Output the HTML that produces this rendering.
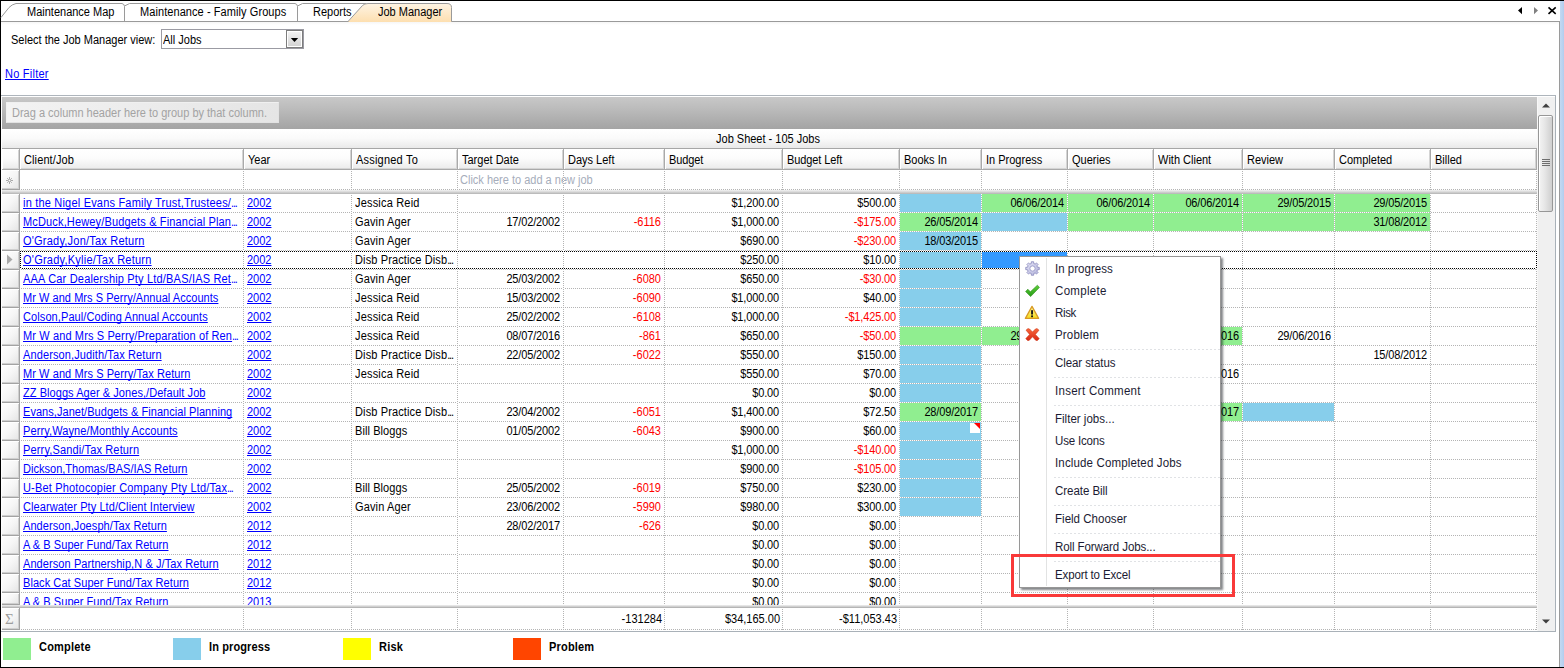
<!DOCTYPE html>
<html lang="en"><head><meta charset="utf-8"><title>Job Manager</title>
<style>
html,body{margin:0;padding:0}
body{width:1564px;height:668px;overflow:hidden;background:#fff;position:relative;
 font-family:"Liberation Sans",sans-serif;font-size:11px;color:#000}
div,span,a{position:absolute;box-sizing:border-box;white-space:nowrap}
.t{height:18px;line-height:18px;font-size:12px;transform:scaleX(.91667);transform-origin:0 0}
.r{text-align:right;transform-origin:100% 0}
.n{letter-spacing:-.16px}
.c{text-align:center;transform-origin:50% 0}
.neg{color:#f00}
a{color:#00f;text-decoration:underline;text-underline-offset:1px;text-decoration-thickness:1px;text-decoration-skip-ink:none}
.el{position:static;display:inline-block;text-decoration:none;letter-spacing:-1.3px}
.hd{height:21px;top:149px;background:linear-gradient(#fff 0,#fcfcfc 45%,#ebebeb 100%);box-shadow:inset 1px 1px 0 #fff,inset -1px -1px 0 #d4d4d4;
 border-right:1px solid #a9a9a9;border-bottom:1px solid #a9a9a9;overflow:hidden}
.vl{width:1px;background-image:repeating-linear-gradient(180deg,#fff 0 1px,#b4b4b4 1px 2px)}
.hl{height:1px;background-image:repeating-linear-gradient(90deg,#fff 0 1px,#b4b4b4 1px 2px)}
.sel{left:2px;width:18px;background:linear-gradient(135deg,#fff 0,#f6f6f6 50%,#e4e4e4 100%);border-right:1px solid #a3a3a3;border-bottom:1px solid #a3a3a3;box-shadow:inset 0 1px 0 #fff,inset -1px -1px 0 #cfcfcf}
.mi{left:35px;height:22px;line-height:23px;font-size:12px;color:#1b1b33;transform:scaleX(.96);transform-origin:0 0}
.ms{left:34px;width:166px;height:1px;background-image:repeating-linear-gradient(90deg,#e0e2e5 0 2px,#fff 2px 4px)}
.lg{width:28px;height:22px;top:638px}
.ll{top:638px;height:18px;line-height:18px;font-weight:bold;font-size:12px;transform:scaleX(.91667);transform-origin:0 0}
</style></head><body>

<div style="left:0;top:0;width:1564px;height:1px;background:#000"></div>
<div style="left:0;top:0;width:1px;height:668px;background:#000"></div>
<div style="left:0;top:667px;width:1564px;height:1px;background:#000"></div>
<div style="left:1560px;top:1px;width:4px;height:666px;background:linear-gradient(90deg,#c4d9f2,#b3cdee)"></div>
<div style="left:1px;top:21px;width:1559px;height:1px;background:#9a9a9a"></div>
<div style="left:1559px;top:21px;width:1px;height:646px;background:#9a9a9a"></div>
<div style="left:1px;top:22px;width:1558px;height:3px;background:linear-gradient(#f6f6f6,#fff)"></div>
<svg style="position:absolute;left:0;top:0" width="470" height="23" viewBox="0 0 470 23">
<defs><linearGradient id="tg" x1="0" y1="0" x2="0" y2="1"><stop offset="0" stop-color="#fef4e4"/><stop offset="1" stop-color="#fddfb0"/></linearGradient></defs>
<path d="M297.5 21 L297.5 6 L302.5 3.5 L366 3.5 L366 21" fill="#fff" stroke="#9a9a9a"/>
<path d="M124.5 21 L124.5 6 L129.5 3.5 L295 3.5 Q297.5 4 297.5 6.5 L297.5 21" fill="#fff" stroke="#9a9a9a"/>
<path d="M1 17.5 L9 7.5 Q12 4.4 16 3.5 L122 3.5 Q124.5 4 124.5 6.5 L124.5 21" fill="#fff" stroke="#9a9a9a"/>
<path d="M348 22 L362.5 5.5 Q364.5 3.5 368 3.5 L447 3.5 Q451.5 3.5 451.5 7.5 L451.5 22 Z" fill="url(#tg)" stroke="none"/>
<path d="M348 21.5 L362.5 5.5 Q364.5 3.5 368 3.5 L447 3.5 Q451.5 3.5 451.5 7.5 L451.5 21.5" fill="none" stroke="#9a9a9a"/>
</svg>
<span class="t" style="left:27px;top:3px">Maintenance Map</span>
<span class="t" style="left:140px;top:3px;letter-spacing:0.082px;">Maintenance - Family Groups</span>
<span class="t" style="left:313px;top:3px">Reports</span>
<span class="t" style="left:378px;top:3px">Job Manager</span>
<svg style="position:absolute;left:1514px;top:5px" width="46" height="12" viewBox="0 0 46 12">
<path d="M8 2 L8 9.2 L4 5.6 Z" fill="#000"/><path d="M20 2 L20 9.2 L24 5.6 Z" fill="#808080"/>
<path d="M34.5 2.4 L41.7 8.8 M41.7 2.4 L34.5 8.8" stroke="#000" stroke-width="1.6" fill="none"/></svg>
<span class="t" style="left:11px;top:31px">Select the Job Manager view:</span>
<div style="left:161px;top:29px;width:143px;height:20px;border:1px solid #9b9ba3;background:#fff"></div>
<span class="t" style="left:163px;top:31px">All Jobs</span>
<div style="left:286px;top:30px;width:17px;height:18px;border:1px solid #7d7d7d;background:linear-gradient(#f4f4f4,#d2d2d2);box-shadow:inset 0 0 0 1px #fff"></div>
<svg style="position:absolute;left:290px;top:37px" width="9" height="6" viewBox="0 0 9 6"><path d="M0.8 1 L8.2 1 L4.5 5 Z" fill="#000"/></svg>
<a class="t" style="left:5px;top:65px;letter-spacing:0.259px;">No Filter</a>
<div style="left:1px;top:95px;width:1555px;height:537px;border:1px solid #a9b1b8;border-left:0;border-top-color:#aeb5bc;background:#fff"></div>
<div style="left:2px;top:97px;width:1535px;height:32px;background:linear-gradient(#c8c8c8 0,#bcbcbc 35%,#a4a4a4 100%)"></div>
<div style="left:6px;top:102px;width:273px;height:21px;background:linear-gradient(90deg,#f3f3f3,#e5e5e5);border:1px solid #f0f0f0;border-right-color:#e2e2e2;border-bottom-color:#e2e2e2"></div>
<span class="t" style="left:12px;top:104px;color:#a3a3a3">Drag a column header here to group by that column.</span>
<div style="left:2px;top:129px;width:1535px;height:20px;background:linear-gradient(#fff,#fafafa 50%,#e9e9e9);border-bottom:1px solid #a6a6a6"></div>
<span class="t c" style="left:1px;width:1534px;top:130px">Job Sheet - 105 Jobs</span>
<div class="hd" style="left:2px;width:18px;padding:0"></div>
<div class="hd" style="left:20px;width:224px"><span class="t" style="left:4px;top:2px;letter-spacing:0.118px;">Client/Job</span></div>
<div class="hd" style="left:244px;width:108px"><span class="t" style="left:4px;top:2px;">Year</span></div>
<div class="hd" style="left:352px;width:106px"><span class="t" style="left:4px;top:2px;letter-spacing:0.225px;">Assigned To</span></div>
<div class="hd" style="left:458px;width:106px"><span class="t" style="left:4px;top:2px;">Target Date</span></div>
<div class="hd" style="left:564px;width:101px"><span class="t" style="left:4px;top:2px;">Days Left</span></div>
<div class="hd" style="left:665px;width:118px"><span class="t" style="left:4px;top:2px;letter-spacing:-0.123px;">Budget</span></div>
<div class="hd" style="left:783px;width:117px"><span class="t" style="left:4px;top:2px;letter-spacing:-0.097px;">Budget Left</span></div>
<div class="hd" style="left:900px;width:82px"><span class="t" style="left:4px;top:2px;">Books In</span></div>
<div class="hd" style="left:982px;width:86px"><span class="t" style="left:4px;top:2px;">In Progress</span></div>
<div class="hd" style="left:1068px;width:86px"><span class="t" style="left:4px;top:2px;">Queries</span></div>
<div class="hd" style="left:1154px;width:89px"><span class="t" style="left:4px;top:2px;">With Client</span></div>
<div class="hd" style="left:1243px;width:92px"><span class="t" style="left:4px;top:2px;">Review</span></div>
<div class="hd" style="left:1335px;width:96px"><span class="t" style="left:4px;top:2px;">Completed</span></div>
<div class="hd" style="left:1431px;width:106px"><span class="t" style="left:4px;top:2px;">Billed</span></div>
<div class="sel" style="top:170px;height:20px"></div>
<svg style="position:absolute;left:6px;top:177px" width="7" height="7" viewBox="0 0 7 7"><path d="M3.5 0V7M0 3.5H7M1.2 1.2L5.8 5.8M5.8 1.2L1.2 5.8" stroke="#a0a0a0" stroke-width="0.9" fill="none"/><circle cx="3.5" cy="3.5" r="1.1" fill="#fff" stroke="#b0b0b0" stroke-width="0.5"/></svg>
<span class="t" style="left:460px;top:171px;color:#a6adbb">Click here to add a new job</span>
<div class="hl" style="left:20px;top:189px;width:1517px"></div>
<div style="left:2px;top:190px;width:1535px;height:4px;background:linear-gradient(#f2f2f2,#dcdcdc 40%,#b3b3b3)"></div>
<div class="sel" style="top:194px;height:19px"></div>
<div style="left:0;top:194px;width:1537px;height:18px;overflow:hidden">
<div style="left:900px;top:0;width:81px;height:18px;background:#87ceeb"></div>
<div style="left:982px;top:0;width:85px;height:18px;background:#90ee90"></div>
<span class="t r n" style="left:982px;top:0;width:82px">06/06/2014</span>
<div style="left:1068px;top:0;width:85px;height:18px;background:#90ee90"></div>
<span class="t r n" style="left:1068px;top:0;width:82px">06/06/2014</span>
<div style="left:1154px;top:0;width:88px;height:18px;background:#90ee90"></div>
<span class="t r n" style="left:1154px;top:0;width:85px">06/06/2014</span>
<div style="left:1243px;top:0;width:91px;height:18px;background:#90ee90"></div>
<span class="t r n" style="left:1243px;top:0;width:88px">29/05/2015</span>
<div style="left:1335px;top:0;width:95px;height:18px;background:#90ee90"></div>
<span class="t r n" style="left:1335px;top:0;width:92px">29/05/2015</span>
<a class="t" style="left:23px;top:0;letter-spacing:0.213px;">in the Nigel Evans Family Trust,Trustees/<span class="el">...</span></a>
<a class="t" style="left:247px;top:0">2002</a>
<span class="t" style="left:355px;top:0;letter-spacing:0.204px;">Jessica Reid</span>
<span class="t r n" style="left:665px;top:0;width:114px">$1,200.00</span>
<span class="t r n" style="left:783px;top:0;width:113px">$500.00</span>
</div>
<div class="hl" style="left:20px;top:212px;width:1517px"></div>
<div class="sel" style="top:213px;height:19px"></div>
<div style="left:0;top:213px;width:1537px;height:18px;overflow:hidden">
<div style="left:900px;top:0;width:81px;height:18px;background:#90ee90"></div>
<span class="t r n" style="left:900px;top:0;width:78px">26/05/2014</span>
<div style="left:982px;top:0;width:85px;height:18px;background:#87ceeb"></div>
<div style="left:1068px;top:0;width:85px;height:18px;background:#90ee90"></div>
<div style="left:1154px;top:0;width:88px;height:18px;background:#90ee90"></div>
<div style="left:1243px;top:0;width:91px;height:18px;background:#90ee90"></div>
<div style="left:1335px;top:0;width:95px;height:18px;background:#90ee90"></div>
<span class="t r n" style="left:1335px;top:0;width:92px">31/08/2012</span>
<a class="t" style="left:23px;top:0;letter-spacing:0.169px;">McDuck,Hewey/Budgets &amp; Financial Plan<span class="el">...</span></a>
<a class="t" style="left:247px;top:0">2002</a>
<span class="t" style="left:355px;top:0;letter-spacing:0.150px;">Gavin Ager</span>
<span class="t r n" style="left:458px;top:0;width:102px">17/02/2002</span>
<span class="t r neg" style="left:564px;top:0;width:97px">-6116</span>
<span class="t r n" style="left:665px;top:0;width:114px">$1,000.00</span>
<span class="t r neg n" style="left:783px;top:0;width:113px">-$175.00</span>
</div>
<div class="hl" style="left:20px;top:231px;width:1517px"></div>
<div class="sel" style="top:232px;height:19px"></div>
<div style="left:0;top:232px;width:1537px;height:18px;overflow:hidden">
<div style="left:900px;top:0;width:81px;height:18px;background:#87ceeb"></div>
<span class="t r n" style="left:900px;top:0;width:78px">18/03/2015</span>
<a class="t" style="left:23px;top:0;letter-spacing:0.236px;">O&#x27;Grady,Jon/Tax Return</a>
<a class="t" style="left:247px;top:0">2002</a>
<span class="t" style="left:355px;top:0;letter-spacing:0.150px;">Gavin Ager</span>
<span class="t r n" style="left:665px;top:0;width:114px">$690.00</span>
<span class="t r neg n" style="left:783px;top:0;width:113px">-$230.00</span>
</div>
<div class="hl" style="left:20px;top:250px;width:1517px"></div>
<div class="sel" style="top:251px;height:19px"></div>
<div style="left:0;top:251px;width:1537px;height:18px;overflow:hidden">
<div style="left:900px;top:0;width:81px;height:18px;background:#87ceeb"></div>
<div style="left:982px;top:0;width:85px;height:18px;background:#3399ff"></div>
<a class="t" style="left:23px;top:0;letter-spacing:0.257px;">O&#x27;Grady,Kylie/Tax Return</a>
<a class="t" style="left:247px;top:0">2002</a>
<span class="t" style="left:355px;top:0;letter-spacing:0.142px;">Disb Practice Disb<span class="el">...</span></span>
<span class="t r n" style="left:665px;top:0;width:114px">$250.00</span>
<span class="t r n" style="left:783px;top:0;width:113px">$10.00</span>
</div>
<div class="hl" style="left:20px;top:269px;width:1517px"></div>
<div class="sel" style="top:270px;height:19px"></div>
<div style="left:0;top:270px;width:1537px;height:18px;overflow:hidden">
<div style="left:900px;top:0;width:81px;height:18px;background:#87ceeb"></div>
<a class="t" style="left:23px;top:0;letter-spacing:0.199px;">AAA Car Dealership Pty Ltd/BAS/IAS Ret<span class="el">...</span></a>
<a class="t" style="left:247px;top:0">2002</a>
<span class="t" style="left:355px;top:0;letter-spacing:0.150px;">Gavin Ager</span>
<span class="t r n" style="left:458px;top:0;width:102px">25/03/2002</span>
<span class="t r neg" style="left:564px;top:0;width:97px">-6080</span>
<span class="t r n" style="left:665px;top:0;width:114px">$650.00</span>
<span class="t r neg n" style="left:783px;top:0;width:113px">-$30.00</span>
</div>
<div class="hl" style="left:20px;top:288px;width:1517px"></div>
<div class="sel" style="top:289px;height:19px"></div>
<div style="left:0;top:289px;width:1537px;height:18px;overflow:hidden">
<div style="left:900px;top:0;width:81px;height:18px;background:#87ceeb"></div>
<a class="t" style="left:23px;top:0;letter-spacing:0.049px;">Mr W and Mrs S Perry/Annual Accounts</a>
<a class="t" style="left:247px;top:0">2002</a>
<span class="t" style="left:355px;top:0;letter-spacing:0.204px;">Jessica Reid</span>
<span class="t r n" style="left:458px;top:0;width:102px">15/03/2002</span>
<span class="t r neg" style="left:564px;top:0;width:97px">-6090</span>
<span class="t r n" style="left:665px;top:0;width:114px">$1,000.00</span>
<span class="t r n" style="left:783px;top:0;width:113px">$40.00</span>
</div>
<div class="hl" style="left:20px;top:307px;width:1517px"></div>
<div class="sel" style="top:308px;height:19px"></div>
<div style="left:0;top:308px;width:1537px;height:18px;overflow:hidden">
<div style="left:900px;top:0;width:81px;height:18px;background:#87ceeb"></div>
<a class="t" style="left:23px;top:0;letter-spacing:0.102px;">Colson,Paul/Coding Annual Accounts</a>
<a class="t" style="left:247px;top:0">2002</a>
<span class="t" style="left:355px;top:0;letter-spacing:0.204px;">Jessica Reid</span>
<span class="t r n" style="left:458px;top:0;width:102px">25/02/2002</span>
<span class="t r neg" style="left:564px;top:0;width:97px">-6108</span>
<span class="t r n" style="left:665px;top:0;width:114px">$1,000.00</span>
<span class="t r neg n" style="left:783px;top:0;width:113px">-$1,425.00</span>
</div>
<div class="hl" style="left:20px;top:326px;width:1517px"></div>
<div class="sel" style="top:327px;height:19px"></div>
<div style="left:0;top:327px;width:1537px;height:18px;overflow:hidden">
<div style="left:900px;top:0;width:81px;height:18px;background:#90ee90"></div>
<div style="left:982px;top:0;width:85px;height:18px;background:#90ee90"></div>
<span class="t r n" style="left:982px;top:0;width:82px">29/06/2016</span>
<div style="left:1068px;top:0;width:85px;height:18px;background:#90ee90"></div>
<span class="t r n" style="left:1068px;top:0;width:82px">29/06/2016</span>
<div style="left:1154px;top:0;width:88px;height:18px;background:#90ee90"></div>
<span class="t r n" style="left:1154px;top:0;width:85px">29/06/2016</span>
<span class="t r n" style="left:1243px;top:0;width:88px">29/06/2016</span>
<a class="t" style="left:23px;top:0;letter-spacing:0.137px;">Mr W and Mrs S Perry/Preparation of Ren<span class="el">...</span></a>
<a class="t" style="left:247px;top:0">2002</a>
<span class="t" style="left:355px;top:0;letter-spacing:0.204px;">Jessica Reid</span>
<span class="t r n" style="left:458px;top:0;width:102px">08/07/2016</span>
<span class="t r neg" style="left:564px;top:0;width:97px">-861</span>
<span class="t r n" style="left:665px;top:0;width:114px">$650.00</span>
<span class="t r neg n" style="left:783px;top:0;width:113px">-$50.00</span>
</div>
<div class="hl" style="left:20px;top:345px;width:1517px"></div>
<div class="sel" style="top:346px;height:19px"></div>
<div style="left:0;top:346px;width:1537px;height:18px;overflow:hidden">
<div style="left:900px;top:0;width:81px;height:18px;background:#87ceeb"></div>
<span class="t r n" style="left:1335px;top:0;width:92px">15/08/2012</span>
<a class="t" style="left:23px;top:0;letter-spacing:0.120px;">Anderson,Judith/Tax Return</a>
<a class="t" style="left:247px;top:0">2002</a>
<span class="t" style="left:355px;top:0;letter-spacing:0.142px;">Disb Practice Disb<span class="el">...</span></span>
<span class="t r n" style="left:458px;top:0;width:102px">22/05/2002</span>
<span class="t r neg" style="left:564px;top:0;width:97px">-6022</span>
<span class="t r n" style="left:665px;top:0;width:114px">$550.00</span>
<span class="t r n" style="left:783px;top:0;width:113px">$150.00</span>
</div>
<div class="hl" style="left:20px;top:364px;width:1517px"></div>
<div class="sel" style="top:365px;height:19px"></div>
<div style="left:0;top:365px;width:1537px;height:18px;overflow:hidden">
<div style="left:900px;top:0;width:81px;height:18px;background:#87ceeb"></div>
<span class="t r n" style="left:1154px;top:0;width:85px">29/06/2016</span>
<a class="t" style="left:23px;top:0;letter-spacing:0.086px;">Mr W and Mrs S Perry/Tax Return</a>
<a class="t" style="left:247px;top:0">2002</a>
<span class="t" style="left:355px;top:0;letter-spacing:0.204px;">Jessica Reid</span>
<span class="t r n" style="left:665px;top:0;width:114px">$550.00</span>
<span class="t r n" style="left:783px;top:0;width:113px">$70.00</span>
</div>
<div class="hl" style="left:20px;top:383px;width:1517px"></div>
<div class="sel" style="top:384px;height:19px"></div>
<div style="left:0;top:384px;width:1537px;height:18px;overflow:hidden">
<div style="left:900px;top:0;width:81px;height:18px;background:#87ceeb"></div>
<a class="t" style="left:23px;top:0;letter-spacing:0.066px;">ZZ Bloggs Ager &amp; Jones,/Default Job</a>
<a class="t" style="left:247px;top:0">2002</a>
<span class="t r n" style="left:665px;top:0;width:114px">$0.00</span>
<span class="t r n" style="left:783px;top:0;width:113px">$0.00</span>
</div>
<div class="hl" style="left:20px;top:402px;width:1517px"></div>
<div class="sel" style="top:403px;height:19px"></div>
<div style="left:0;top:403px;width:1537px;height:18px;overflow:hidden">
<div style="left:900px;top:0;width:81px;height:18px;background:#90ee90"></div>
<span class="t r n" style="left:900px;top:0;width:78px">28/09/2017</span>
<div style="left:1068px;top:0;width:85px;height:18px;background:#90ee90"></div>
<span class="t r n" style="left:1068px;top:0;width:82px">28/09/2017</span>
<div style="left:1154px;top:0;width:88px;height:18px;background:#90ee90"></div>
<span class="t r n" style="left:1154px;top:0;width:85px">28/09/2017</span>
<div style="left:1243px;top:0;width:91px;height:18px;background:#87ceeb"></div>
<a class="t" style="left:23px;top:0;letter-spacing:0.054px;">Evans,Janet/Budgets &amp; Financial Planning</a>
<a class="t" style="left:247px;top:0">2002</a>
<span class="t" style="left:355px;top:0;letter-spacing:0.142px;">Disb Practice Disb<span class="el">...</span></span>
<span class="t r n" style="left:458px;top:0;width:102px">23/04/2002</span>
<span class="t r neg" style="left:564px;top:0;width:97px">-6051</span>
<span class="t r n" style="left:665px;top:0;width:114px">$1,400.00</span>
<span class="t r n" style="left:783px;top:0;width:113px">$72.50</span>
</div>
<div class="hl" style="left:20px;top:421px;width:1517px"></div>
<div class="sel" style="top:422px;height:19px"></div>
<div style="left:0;top:422px;width:1537px;height:18px;overflow:hidden">
<div style="left:900px;top:0;width:81px;height:18px;background:#87ceeb"></div>
<svg style="position:absolute;left:970px;top:1px" width="10" height="10" viewBox="0 0 10 10"><rect width="10" height="10" fill="#fff"/><path d="M4 0H10V6Z" fill="#f00"/></svg>
<a class="t" style="left:23px;top:0;letter-spacing:0.120px;">Perry,Wayne/Monthly Accounts</a>
<a class="t" style="left:247px;top:0">2002</a>
<span class="t" style="left:355px;top:0;letter-spacing:0.093px;">Bill Bloggs</span>
<span class="t r n" style="left:458px;top:0;width:102px">01/05/2002</span>
<span class="t r neg" style="left:564px;top:0;width:97px">-6043</span>
<span class="t r n" style="left:665px;top:0;width:114px">$900.00</span>
<span class="t r n" style="left:783px;top:0;width:113px">$60.00</span>
</div>
<div class="hl" style="left:20px;top:440px;width:1517px"></div>
<div class="sel" style="top:441px;height:19px"></div>
<div style="left:0;top:441px;width:1537px;height:18px;overflow:hidden">
<div style="left:900px;top:0;width:81px;height:18px;background:#87ceeb"></div>
<a class="t" style="left:23px;top:0;letter-spacing:0.163px;">Perry,Sandi/Tax Return</a>
<a class="t" style="left:247px;top:0">2002</a>
<span class="t r n" style="left:665px;top:0;width:114px">$1,000.00</span>
<span class="t r neg n" style="left:783px;top:0;width:113px">-$140.00</span>
</div>
<div class="hl" style="left:20px;top:459px;width:1517px"></div>
<div class="sel" style="top:460px;height:19px"></div>
<div style="left:0;top:460px;width:1537px;height:18px;overflow:hidden">
<div style="left:900px;top:0;width:81px;height:18px;background:#87ceeb"></div>
<a class="t" style="left:23px;top:0;letter-spacing:0.025px;">Dickson,Thomas/BAS/IAS Return</a>
<a class="t" style="left:247px;top:0">2002</a>
<span class="t r n" style="left:665px;top:0;width:114px">$900.00</span>
<span class="t r neg n" style="left:783px;top:0;width:113px">-$105.00</span>
</div>
<div class="hl" style="left:20px;top:478px;width:1517px"></div>
<div class="sel" style="top:479px;height:19px"></div>
<div style="left:0;top:479px;width:1537px;height:18px;overflow:hidden">
<div style="left:900px;top:0;width:81px;height:18px;background:#87ceeb"></div>
<a class="t" style="left:23px;top:0;letter-spacing:0.195px;">U-Bet Photocopier Company Pty Ltd/Tax<span class="el">...</span></a>
<a class="t" style="left:247px;top:0">2002</a>
<span class="t" style="left:355px;top:0;letter-spacing:0.093px;">Bill Bloggs</span>
<span class="t r n" style="left:458px;top:0;width:102px">25/05/2002</span>
<span class="t r neg" style="left:564px;top:0;width:97px">-6019</span>
<span class="t r n" style="left:665px;top:0;width:114px">$750.00</span>
<span class="t r n" style="left:783px;top:0;width:113px">$230.00</span>
</div>
<div class="hl" style="left:20px;top:497px;width:1517px"></div>
<div class="sel" style="top:498px;height:19px"></div>
<div style="left:0;top:498px;width:1537px;height:18px;overflow:hidden">
<div style="left:900px;top:0;width:81px;height:18px;background:#87ceeb"></div>
<a class="t" style="left:23px;top:0;letter-spacing:0.089px;">Clearwater Pty Ltd/Client Interview</a>
<a class="t" style="left:247px;top:0">2002</a>
<span class="t" style="left:355px;top:0;letter-spacing:0.150px;">Gavin Ager</span>
<span class="t r n" style="left:458px;top:0;width:102px">23/06/2002</span>
<span class="t r neg" style="left:564px;top:0;width:97px">-5990</span>
<span class="t r n" style="left:665px;top:0;width:114px">$980.00</span>
<span class="t r n" style="left:783px;top:0;width:113px">$300.00</span>
</div>
<div class="hl" style="left:20px;top:516px;width:1517px"></div>
<div class="sel" style="top:517px;height:19px"></div>
<div style="left:0;top:517px;width:1537px;height:18px;overflow:hidden">
<a class="t" style="left:23px;top:0;letter-spacing:0.085px;">Anderson,Joesph/Tax Return</a>
<a class="t" style="left:247px;top:0">2012</a>
<span class="t r n" style="left:458px;top:0;width:102px">28/02/2017</span>
<span class="t r neg" style="left:564px;top:0;width:97px">-626</span>
<span class="t r n" style="left:665px;top:0;width:114px">$0.00</span>
<span class="t r n" style="left:783px;top:0;width:113px">$0.00</span>
</div>
<div class="hl" style="left:20px;top:535px;width:1517px"></div>
<div class="sel" style="top:536px;height:19px"></div>
<div style="left:0;top:536px;width:1537px;height:18px;overflow:hidden">
<a class="t" style="left:23px;top:0;letter-spacing:0.048px;">A &amp; B Super Fund/Tax Return</a>
<a class="t" style="left:247px;top:0">2012</a>
<span class="t r n" style="left:665px;top:0;width:114px">$0.00</span>
<span class="t r n" style="left:783px;top:0;width:113px">$0.00</span>
</div>
<div class="hl" style="left:20px;top:554px;width:1517px"></div>
<div class="sel" style="top:555px;height:19px"></div>
<div style="left:0;top:555px;width:1537px;height:18px;overflow:hidden">
<a class="t" style="left:23px;top:0;letter-spacing:0.092px;">Anderson Partnership,N &amp; J/Tax Return</a>
<a class="t" style="left:247px;top:0">2012</a>
<span class="t r n" style="left:665px;top:0;width:114px">$0.00</span>
<span class="t r n" style="left:783px;top:0;width:113px">$0.00</span>
</div>
<div class="hl" style="left:20px;top:573px;width:1517px"></div>
<div class="sel" style="top:574px;height:19px"></div>
<div style="left:0;top:574px;width:1537px;height:18px;overflow:hidden">
<a class="t" style="left:23px;top:0;letter-spacing:0.075px;">Black Cat Super Fund/Tax Return</a>
<a class="t" style="left:247px;top:0">2012</a>
<span class="t r n" style="left:665px;top:0;width:114px">$0.00</span>
<span class="t r n" style="left:783px;top:0;width:113px">$0.00</span>
</div>
<div class="hl" style="left:20px;top:592px;width:1517px"></div>
<div class="sel" style="top:593px;height:12px"></div>
<div style="left:0;top:593px;width:1537px;height:12px;overflow:hidden">
<a class="t" style="left:23px;top:0;letter-spacing:0.048px;">A &amp; B Super Fund/Tax Return</a>
<a class="t" style="left:247px;top:0">2013</a>
<span class="t r n" style="left:665px;top:0;width:114px">$0.00</span>
<span class="t r n" style="left:783px;top:0;width:113px">$0.00</span>
</div>
<div style="left:2px;top:605px;width:1535px;height:3px;background:linear-gradient(#f0f0f0,#d0d0d0 50%,#a8a8a8)"></div>
<div class="sel" style="top:608px;height:22px"></div>
<span style="left:5px;top:610px;font-size:15px;line-height:18px;color:#9c9c9c;font-family:'Liberation Serif',serif">Σ</span>
<span class="t r" style="left:564px;top:610px;width:98px">-131284</span>
<span class="t r" style="left:665px;top:610px;width:115px">$34,165.00</span>
<span class="t r" style="left:783px;top:610px;width:114px">-$11,053.43</span>
<div class="hl" style="left:20px;top:629px;width:1517px"></div>
<div class="vl" style="left:243px;top:170px;height:20px"></div>
<div class="vl" style="left:243px;top:194px;height:411px"></div>
<div class="vl" style="left:243px;top:608px;height:22px"></div>
<div class="vl" style="left:351px;top:170px;height:20px"></div>
<div class="vl" style="left:351px;top:194px;height:411px"></div>
<div class="vl" style="left:351px;top:608px;height:22px"></div>
<div class="vl" style="left:457px;top:170px;height:20px"></div>
<div class="vl" style="left:457px;top:194px;height:411px"></div>
<div class="vl" style="left:457px;top:608px;height:22px"></div>
<div class="vl" style="left:563px;top:170px;height:20px"></div>
<div class="vl" style="left:563px;top:194px;height:411px"></div>
<div class="vl" style="left:563px;top:608px;height:22px"></div>
<div class="vl" style="left:664px;top:170px;height:20px"></div>
<div class="vl" style="left:664px;top:194px;height:411px"></div>
<div class="vl" style="left:664px;top:608px;height:22px"></div>
<div class="vl" style="left:782px;top:170px;height:20px"></div>
<div class="vl" style="left:782px;top:194px;height:411px"></div>
<div class="vl" style="left:782px;top:608px;height:22px"></div>
<div class="vl" style="left:899px;top:170px;height:20px"></div>
<div class="vl" style="left:899px;top:194px;height:411px"></div>
<div class="vl" style="left:899px;top:608px;height:22px"></div>
<div class="vl" style="left:981px;top:170px;height:20px"></div>
<div class="vl" style="left:981px;top:194px;height:411px"></div>
<div class="vl" style="left:981px;top:608px;height:22px"></div>
<div class="vl" style="left:1067px;top:170px;height:20px"></div>
<div class="vl" style="left:1067px;top:194px;height:411px"></div>
<div class="vl" style="left:1067px;top:608px;height:22px"></div>
<div class="vl" style="left:1153px;top:170px;height:20px"></div>
<div class="vl" style="left:1153px;top:194px;height:411px"></div>
<div class="vl" style="left:1153px;top:608px;height:22px"></div>
<div class="vl" style="left:1242px;top:170px;height:20px"></div>
<div class="vl" style="left:1242px;top:194px;height:411px"></div>
<div class="vl" style="left:1242px;top:608px;height:22px"></div>
<div class="vl" style="left:1334px;top:170px;height:20px"></div>
<div class="vl" style="left:1334px;top:194px;height:411px"></div>
<div class="vl" style="left:1334px;top:608px;height:22px"></div>
<div class="vl" style="left:1430px;top:170px;height:20px"></div>
<div class="vl" style="left:1430px;top:194px;height:411px"></div>
<div class="vl" style="left:1430px;top:608px;height:22px"></div>
<div class="vl" style="left:1536px;top:170px;height:20px"></div>
<div class="vl" style="left:1536px;top:194px;height:411px"></div>
<div class="vl" style="left:1536px;top:608px;height:22px"></div>
<div style="left:20px;top:251px;width:1517px;height:1px;background-image:repeating-linear-gradient(90deg,#000 0 1px,#fff 1px 2px)"></div>
<div style="left:20px;top:268px;width:1517px;height:1px;background-image:repeating-linear-gradient(90deg,#000 0 1px,#fff 1px 2px)"></div>
<div style="left:20px;top:251px;width:1px;height:18px;background-image:repeating-linear-gradient(180deg,#000 0 1px,#fff 1px 2px)"></div>
<div style="left:1536px;top:251px;width:1px;height:18px;background-image:repeating-linear-gradient(180deg,#000 0 1px,#fff 1px 2px)"></div>
<svg style="position:absolute;left:6px;top:254px" width="8" height="11" viewBox="0 0 8 11"><path d="M1 0.5 L6.5 5.5 L1 10.5 Z" fill="#a8a8a8"/></svg>
<div style="left:1537px;top:97px;width:18px;height:534px;background:#f0f0f0;border-left:1px solid #f7f7f7"></div>
<svg style="position:absolute;left:1541px;top:102px" width="10" height="7" viewBox="0 0 10 7"><path d="M1 5.5 L5 1.5 L9 5.5 Z" fill="#404040"/></svg>
<svg style="position:absolute;left:1541px;top:618px" width="10" height="7" viewBox="0 0 10 7"><path d="M1 1.5 L9 1.5 L5 5.5 Z" fill="#404040"/></svg>
<div style="left:1538px;top:115px;width:15px;height:97px;border:1px solid #979797;border-radius:2px;background:linear-gradient(90deg,#f4f4f4,#e6e6e6 45%,#cfcfcf);box-shadow:inset 1px 1px 0 #fff"></div>
<div style="left:1542px;top:159px;width:8px;height:1px;background:#6e6e6e"></div>
<div style="left:1542px;top:161px;width:8px;height:1px;background:#6e6e6e"></div>
<div style="left:1542px;top:163px;width:8px;height:1px;background:#6e6e6e"></div>
<div style="left:1542px;top:165px;width:8px;height:1px;background:#6e6e6e"></div>
<div class="lg" style="left:3px;background:#90ee90"></div>
<span class="ll" style="left:39px;letter-spacing:0.228px;">Complete</span>
<div class="lg" style="left:173px;background:#87ceeb"></div>
<span class="ll" style="left:209px;letter-spacing:0.128px;">In progress</span>
<div class="lg" style="left:343px;background:#ffff00"></div>
<span class="ll" style="left:379px;letter-spacing:0.205px;">Risk</span>
<div class="lg" style="left:513px;background:#ff4500"></div>
<span class="ll" style="left:549px;letter-spacing:0.200px;">Problem</span>
<div style="left:1019px;top:256px;width:202px;height:332px;background:#fff;border:1px solid #979797;box-shadow:2px 2px 2px rgba(10,14,20,.5)">
<div style="left:26px;top:1px;width:1px;height:328px;background:#e2e3e3"></div>
<span class="mi" style="top:1px;letter-spacing:0.007px;">In progress</span>
<span class="mi" style="top:23px;letter-spacing:0.325px;">Complete</span>
<span class="mi" style="top:45px;letter-spacing:-0.367px;">Risk</span>
<span class="mi" style="top:67px;letter-spacing:0.179px;">Problem</span>
<div class="ms" style="top:92px"></div>
<span class="mi" style="top:95px;letter-spacing:-0.093px;">Clear status</span>
<div class="ms" style="top:120px"></div>
<span class="mi" style="top:123px;letter-spacing:0.279px;">Insert Comment</span>
<div class="ms" style="top:148px"></div>
<span class="mi" style="top:151px;letter-spacing:0.005px;">Filter jobs...</span>
<span class="mi" style="top:173px;letter-spacing:-0.200px;">Use Icons</span>
<span class="mi" style="top:195px;letter-spacing:0.147px;">Include Completed Jobs</span>
<div class="ms" style="top:220px"></div>
<span class="mi" style="top:223px;letter-spacing:-0.052px;">Create Bill</span>
<div class="ms" style="top:248px"></div>
<span class="mi" style="top:251px;letter-spacing:0.015px;">Field Chooser</span>
<div class="ms" style="top:276px"></div>
<span class="mi" style="top:279px;letter-spacing:-0.101px;">Roll Forward Jobs...</span>
<div class="ms" style="top:304px"></div>
<span class="mi" style="top:307px;letter-spacing:-0.144px;">Export to Excel</span>
<svg style="position:absolute;left:5px;top:4px" width="15" height="15" viewBox="0 0 16 16">
<defs><linearGradient id="gg" x1="0" y1="0" x2="1" y2="1"><stop offset="0" stop-color="#e4e4f6"/><stop offset="1" stop-color="#b4b4dc"/></linearGradient></defs>
<path d="M6.69 2.66 L6.76 0.81 L9.24 0.81 L9.31 2.66 L10.85 3.30 L12.21 2.04 L13.96 3.79 L12.70 5.15 L13.34 6.69 L15.19 6.76 L15.19 9.24 L13.34 9.31 L12.70 10.85 L13.96 12.21 L12.21 13.96 L10.85 12.70 L9.31 13.34 L9.24 15.19 L6.76 15.19 L6.69 13.34 L5.15 12.70 L3.79 13.96 L2.04 12.21 L3.30 10.85 L2.66 9.31 L0.81 9.24 L0.81 6.76 L2.66 6.69 L3.30 5.15 L2.04 3.79 L3.79 2.04 L5.15 3.30 Z" fill="url(#gg)" stroke="#8a8abc" stroke-width="0.9" stroke-linejoin="round"/>
<circle cx="8" cy="8" r="2.8" fill="#fff" stroke="#9696c6" stroke-width="0.9"/></svg>
<svg style="position:absolute;left:5px;top:27px" width="15" height="14" viewBox="0 0 15 14">
<defs><linearGradient id="cg" x1="0" y1="0" x2="0" y2="1"><stop offset="0" stop-color="#5fd03c"/><stop offset="1" stop-color="#259a14"/></linearGradient></defs>
<path d="M0.6 7.6 L2.8 5.2 L5.4 7.8 L12.4 1.2 L14.4 3.4 L5.6 12.6 Z" fill="url(#cg)" stroke="#2a8a18" stroke-width="0.6" stroke-linejoin="round"/></svg>
<svg style="position:absolute;left:4px;top:48px" width="16" height="15" viewBox="0 0 16 15">
<defs><linearGradient id="wg" x1="0" y1="0" x2="0" y2="1"><stop offset="0" stop-color="#fdf6a0"/><stop offset="1" stop-color="#f7dc1c"/></linearGradient></defs>
<path d="M8 1.4 L14.6 13.4 L1.4 13.4 Z" fill="url(#wg)" stroke="#d89a24" stroke-width="1.3" stroke-linejoin="round"/>
<rect x="7.1" y="5.2" width="1.9" height="4.3" fill="#1a1a1a"/><rect x="7.1" y="10.4" width="1.9" height="1.8" fill="#1a1a1a"/></svg>
<svg style="position:absolute;left:5px;top:70px" width="15" height="15" viewBox="0 0 15 15">
<defs><linearGradient id="xg" x1="0" y1="0" x2="0" y2="1"><stop offset="0" stop-color="#f8683c"/><stop offset="1" stop-color="#d82814"/></linearGradient></defs>
<path d="M1 3.2 Q3 0.6 4.6 2 L7.5 5 L10.4 2 Q12 0.6 14 3.2 L10.4 7.4 L14.2 11.6 Q12.6 14.6 10.6 13.2 L7.5 9.8 L4.4 13.2 Q2.4 14.6 0.8 11.6 L4.6 7.4 Z" fill="url(#xg)" stroke="#c83010" stroke-width="0.5" stroke-linejoin="round"/></svg>
</div>
<div style="left:1011px;top:554px;width:224px;height:43px;border:3px solid #f93939"></div>
</body></html>
